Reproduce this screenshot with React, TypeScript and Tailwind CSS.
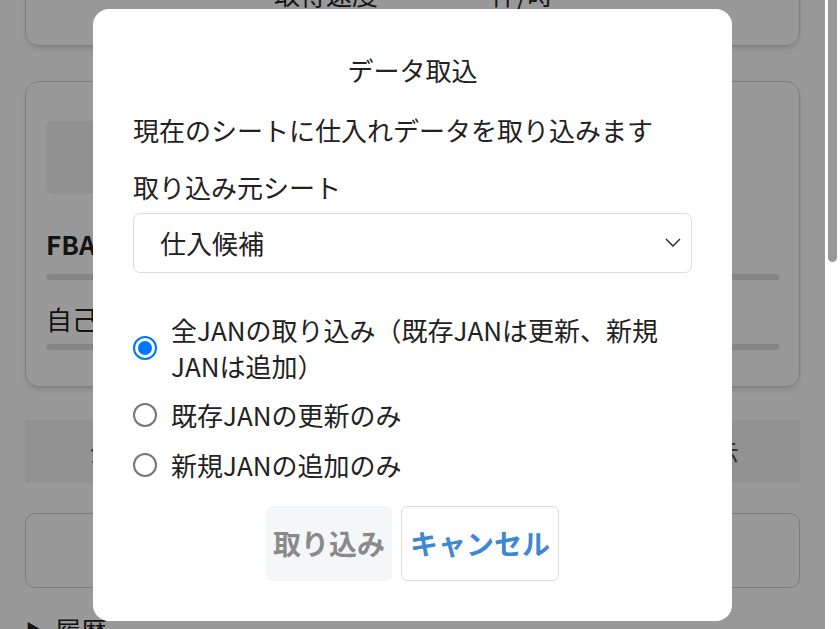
import { useState } from "react";

const options = [
  { id: "all", label: "全JANの取り込み（既存JANは更新、新規JANは追加）" },
  { id: "update", label: "既存JANの更新のみ" },
  { id: "add", label: "新規JANの追加のみ" },
];

function Radio({ checked }: { checked: boolean }) {
  return checked ? (
    <span className="flex h-[24px] w-[24px] shrink-0 items-center justify-center rounded-full border-[2px] border-[#0075ff] bg-white">
      <span className="h-[14px] w-[14px] rounded-full bg-[#0075ff]" />
    </span>
  ) : (
    <span className="h-[24px] w-[24px] shrink-0 rounded-full border-[2px] border-[#767676] bg-white" />
  );
}

export default function App() {
  const [mode, setMode] = useState("all");

  return (
    <div
      className="flex h-[629px] w-[840px] overflow-hidden bg-white text-[#222]"
      style={{ fontFamily: '"Noto Sans CJK JP", "Noto Sans", sans-serif' }}
    >
      {/* page behind the dialog */}
      <div className="relative h-full w-[825px] shrink-0 overflow-hidden px-[25px]">
        <div className="mt-[-60px] flex h-[106px] items-end gap-[113px] rounded-[14px] border border-[#d4d4d4] pb-[33px] pl-[248px] text-[26px] leading-[36px] shadow-md">
          <span>取得速度</span>
          <span>件/時</span>
        </div>

        <div className="mt-[35px] h-[306px] rounded-[14px] border border-[#d4d4d4] px-[20px] pt-[39px] shadow-md">
          <div className="h-[73px] w-[200px] rounded-[6px] bg-[#f2f2f2]" />
          <div className="mt-[32px] text-[26px] font-bold leading-[36px]">FBA在庫</div>
          <div className="mt-[12px] h-[6px] rounded-full bg-[#dedede]" />
          <div className="mt-[21px] text-[26px] leading-[36px]">自己発送</div>
          <div className="mt-[7px] h-[6px] rounded-full bg-[#dedede]" />
        </div>

        <div className="mt-[33px] flex h-[63px] items-center justify-between bg-[#f3f3f3] pl-[63px] pr-[61px] text-[26px] text-[#555]">
          <span>シートを開く</span>
          <span>一覧を表示</span>
        </div>

        <div className="mt-[30px] h-[75px] rounded-[10px] border border-[#cfcfcf]" />

        <div className="mt-[24px] flex items-center gap-[8px] text-[26px] leading-[36px]">
          <span className="text-[22px]">▶</span>
          <span>履歴</span>
        </div>

        {/* dialog overlay */}
        <div className="absolute inset-0 flex items-center justify-center bg-black/40">
          <div className="flex w-[639px] flex-col rounded-[16px] bg-white px-[40px] pb-[40px] pt-[43px] text-[26px] leading-[36px] text-[#222]">
            <h2 className="text-center font-normal">データ取込</h2>
            <p className="mt-[24px]">現在のシートに仕入れデータを取り込みます</p>
            <label className="mt-[21px]">取り込み元シート</label>
            <div className="mt-[8px] flex h-[60px] items-center justify-between rounded-[7px] border border-[#dcdcdc] pl-[26px] pr-[10px]">
              <span>仕入候補</span>
              <svg width="16" height="9" viewBox="0 0 16 9" fill="none">
                <path d="M1 1l7 7 7-7" stroke="#222" strokeWidth="1.4" />
              </svg>
            </div>

            <div className="mt-[39px] flex flex-col">
              {options.map((o, i) => (
                <button
                  key={o.id}
                  type="button"
                  onClick={() => setMode(o.id)}
                  className={`flex items-center gap-[14px] text-left ${i === 1 ? "mt-[13px]" : i === 2 ? "mt-[14px]" : ""}`}
                >
                  <Radio checked={mode === o.id} />
                  <span>{o.label}</span>
                </button>
              ))}
            </div>

            <div className="mt-[23px] flex justify-center gap-[9px]">
              <button className="h-[75px] rounded-[6px] border border-transparent bg-[#f4f6f8] px-[6px] text-[28px] font-bold text-[#8a8a8a]">
                取り込み
              </button>
              <button className="h-[75px] rounded-[6px] border border-[#dcdcdc] bg-white px-[8px] text-[28px] font-bold text-[#3d87d3]">
                キャンセル
              </button>
            </div>
          </div>
        </div>
      </div>

      {/* scrollbar */}
      <div className="flex w-[15px] shrink-0 justify-center bg-white">
        <div className="h-[262px] w-[9px] rounded-b-full bg-[#989898]" />
      </div>
    </div>
  );
}
